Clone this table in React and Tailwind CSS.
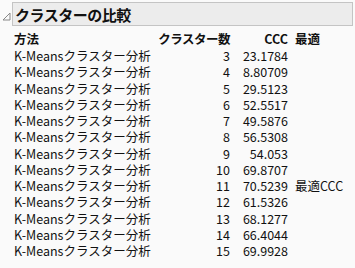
import React from 'react';

const rows = [
  [3, '23.1784', ''],
  [4, '8.80709', ''],
  [5, '29.5123', ''],
  [6, '52.5517', ''],
  [7, '49.5876', ''],
  [8, '56.5308', ''],
  [9, '54.053', ''],
  [10, '69.8707', ''],
  [11, '70.5239', '最適CCC'],
  [12, '61.5326', ''],
  [13, '68.1277', ''],
  [14, '66.4044', ''],
  [15, '69.9928', ''],
];

const font = { fontFamily: '"Noto Sans CJK JP", "Noto Sans", sans-serif' };

const App = () => {
  return (
    <div className="w-[355px] h-[268px] bg-[#fafafa] text-[#111] overflow-hidden" style={font}>
      <div className="flex items-center pt-[2px] pr-[2px]">
        <div className="w-[12px] flex justify-center">
          <svg width="9" height="9" viewBox="0 0 9 9" className="mt-[5px]">
            <path d="M8 1 L8 8 L1 8 Z" fill="none" stroke="#888" strokeWidth="1" />
          </svg>
        </div>
        <div className="flex-1 h-[24px] bg-[#ececec] border border-[#c4c4c4] flex items-center pl-[2px]">
          <span className="text-[15px] font-bold leading-none tracking-[-0.5px]">クラスターの比較</span>
        </div>
      </div>
      <div className="pl-[14px] mt-[3px] text-[12.5px] whitespace-nowrap">
        <div className="flex h-[19px] leading-[19px] items-center font-bold">
          <div className="w-[142px]">方法</div>
          <div className="w-[74px] text-right tracking-[-0.5px]">クラスター数</div>
          <div className="w-[58px] text-right">CCC</div>
          <div className="pl-[7px]">最適</div>
        </div>
        {rows.map(([n, ccc, best]) => (
          <div key={n} className="flex h-[16.25px] leading-[16.25px] items-center">
            <div className="w-[142px]">K-Meansクラスター分析</div>
            <div className="w-[74px] text-right">{n}</div>
            <div className="w-[58px] text-right">{ccc}</div>
            <div className="pl-[7px]">{best}</div>
          </div>
        ))}
      </div>
    </div>
  );
};

export default App;
